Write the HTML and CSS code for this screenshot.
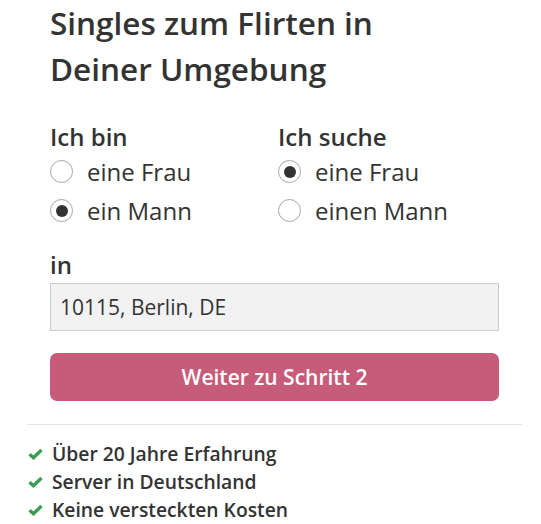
FILE: index.html
```html
<!DOCTYPE html>
<html lang="de">

<head>
  <meta charset="utf-8" />
  <title>Singles zum Flirten</title>
  <meta name="viewport" content="width=device-width, initial-scale=1">
  <link rel="stylesheet" href="styles.css">
</head>

<body>
  <div class="box">
    <form class="signup">
      <h1>Singles zum Flirten in Deiner Umgebung</h1>

      <div class="choices">
        <fieldset class="group">
          <legend>Ich bin</legend>
          <label class="radio"><input type="radio" name="gender"> <span>eine Frau</span></label>
          <label class="radio"><input type="radio" name="gender" checked> <span>ein Mann</span></label>
        </fieldset>
        <fieldset class="group">
          <legend>Ich suche</legend>
          <label class="radio"><input type="radio" name="search" checked> <span>eine Frau</span></label>
          <label class="radio"><input type="radio" name="search"> <span>einen Mann</span></label>
        </fieldset>
      </div>

      <label class="field-label" for="city">in</label>
      <input class="city" id="city" type="text" value="10115, Berlin, DE">

      <button class="next" type="button">Weiter zu Schritt 2</button>
    </form>

    <!-- ===== VORTEILE ===== -->
    <ul class="perks">
      <li><svg viewBox="0 0 16 12" class="check"><path d="M1.6 6.2 L5.8 10 L14.4 1.8" /></svg>Über 20 Jahre Erfahrung</li>
      <li><svg viewBox="0 0 16 12" class="check"><path d="M1.6 6.2 L5.8 10 L14.4 1.8" /></svg>Server in Deutschland</li>
      <li><svg viewBox="0 0 16 12" class="check"><path d="M1.6 6.2 L5.8 10 L14.4 1.8" /></svg>Keine versteckten Kosten</li>
    </ul>
  </div>
</body>
</html>
```

FILE: styles.css
```css
/* ===== RESET & BODY ===== */
* {
  box-sizing: border-box;
  margin: 0;
  padding: 0
}

body {
  font-family: "Open Sans", "Noto Sans", sans-serif;
  color: #333;
  background: #fff
}

.box {
  width: 495px;
  margin-left: 27px
}

/* ===== FORMULAR ===== */
.signup {
  padding: 0 23px 23px;
  border-bottom: 1px solid #e3e3e3
}

h1 {
  font-size: 31.5px;
  font-weight: 600;
  line-height: 46px;
  width: 380px
}

.choices {
  display: flex;
  margin-top: 30px
}

.group {
  border: 0;
  display: flex;
  flex-direction: column
}

.group:first-child {
  flex: 0 0 228px
}

.group legend,
.field-label {
  font-size: 24px;
  font-weight: 600;
  line-height: 30px
}

.radio {
  display: flex;
  align-items: center;
  gap: 14px;
  font-size: 24px;
  line-height: 39px
}

.radio input {
  appearance: none;
  width: 23px;
  height: 23px;
  border: 1px solid #a6a6a6;
  border-radius: 50%;
  background: #fff;
  display: grid;
  place-content: center
}

.radio input:checked::before {
  content: "";
  width: 12px;
  height: 12px;
  border-radius: 50%;
  background: #333
}

.field-label {
  display: block;
  margin-top: 20px
}

.city {
  display: block;
  width: 100%;
  height: 48px;
  margin-top: 3px;
  padding: 0 9px;
  font: inherit;
  font-size: 21px;
  color: #333;
  background: #f2f2f2;
  border: 1px solid #ccc
}

.next {
  display: block;
  width: 100%;
  height: 48px;
  margin-top: 22px;
  border: 0;
  border-radius: 7px;
  background: #c75b7a;
  color: #fff;
  font: inherit;
  font-size: 21px;
  font-weight: 600;
  cursor: pointer
}

/* ===== VORTEILE ===== */
.perks {
  list-style: none;
  padding: 15px 0 0 1px
}

.perks li {
  display: flex;
  align-items: center;
  gap: 9px;
  font-size: 19.3px;
  font-weight: 600;
  line-height: 28px
}

.check {
  width: 15px;
  height: 12px;
  fill: none;
  stroke: #3a9e50;
  stroke-width: 3.6
}
```
